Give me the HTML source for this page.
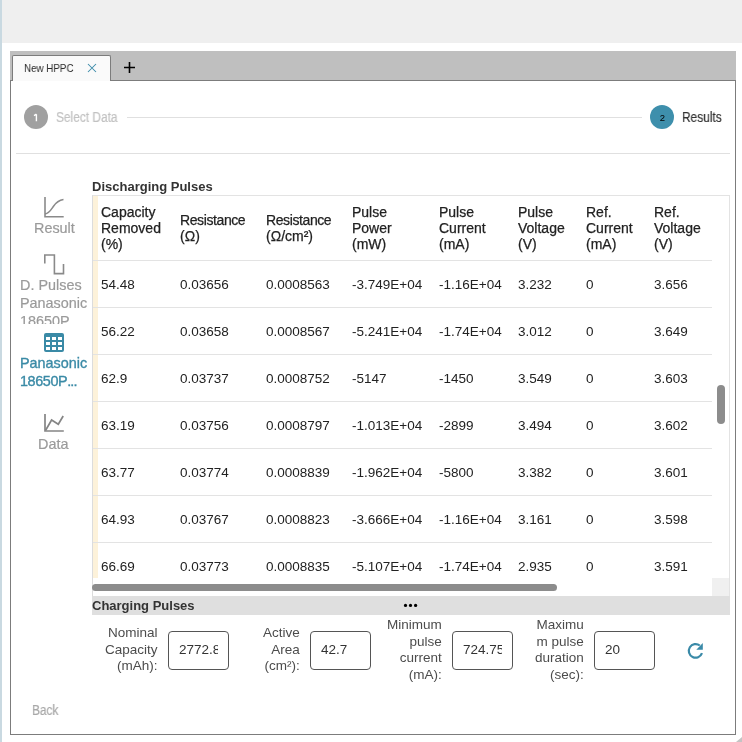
<!DOCTYPE html>
<html><head><meta charset="utf-8">
<style>
*{margin:0;padding:0;box-sizing:border-box;}
html,body{width:742px;height:742px;overflow:hidden;background:#fff;font-family:"Liberation Sans",sans-serif;position:relative;}
.a{will-change:transform;}
.a{position:absolute;white-space:nowrap;}
.topgray{left:0;top:0;width:742px;height:43px;background:#efefef;}
.bluestrip{left:0;top:0;width:2px;height:742px;background:#c9d9e1;}
.tabbar{left:10px;top:51px;width:726px;height:30px;background:#bfbfbf;}
.win{left:10px;top:80px;width:726px;height:655px;border:1px solid #7c7c7c;background:#fff;}
.tab{left:12px;top:55px;width:99px;height:26px;background:#fafafa;border:1px solid #7c7c7c;border-bottom:none;border-radius:2px 2px 0 0;}
.tabtxt{left:24.3px;top:62px;font-size:11px;color:#2a2a2a;transform:scaleX(0.89);transform-origin:0 0;}
.circ{width:24px;height:24px;border-radius:50%;text-align:center;font-size:10px;line-height:26px;}
.stepline{height:1px;background:#e0e0e0;}
.steplbl{font-size:14px;line-height:16px;transform:scaleX(0.85);transform-origin:0 0;-webkit-text-stroke:0.2px currentColor;}
.side{font-size:14.4px;line-height:18px;color:#9a9a9a;-webkit-text-stroke:0.2px #9a9a9a;}
.title{font-size:13px;font-weight:bold;color:#333;line-height:16px;}
.th{font-size:14px;line-height:16px;color:#222;-webkit-text-stroke:0.25px #222;}
.td{font-size:13.5px;line-height:16px;color:#222;}
.sep{left:93px;width:619px;height:1px;background:#e3e3e3;}
.lbl{font-size:13.5px;line-height:16.5px;color:#4c4c4c;text-align:right;}
.inp{width:61px;height:39px;border:1px solid #555;border-radius:4px;background:#fff;}
.it{position:absolute;left:10px;right:10px;top:0;overflow:hidden;font-size:13.5px;line-height:35px;color:#333;white-space:nowrap;}
</style></head><body>
<div class="a topgray"></div>
<div class="a bluestrip"></div>
<div class="a tabbar"></div>
<div class="a win"></div>
<div class="a tab"></div>
<div class="a tabtxt">New HPPC</div>
<svg class="a" style="left:87px;top:63px" width="10" height="10" viewBox="0 0 10 10"><path d="M1 1L9 9M9 1L1 9" stroke="#3a8aa8" stroke-width="1.05" fill="none"/></svg>
<svg class="a" style="left:123px;top:61px" width="13" height="13" viewBox="0 0 13 13"><path d="M6.5 1V12M1 6.5H12" stroke="#000" stroke-width="1.6" fill="none"/></svg>

<!-- stepper -->
<div class="a circ" style="left:24px;top:105px;background:#a0a0a0;"></div>
<svg class="a" style="left:24px;top:105px" width="24" height="24" viewBox="0 0 24 24"><path d="M12.4 9.2V16.2M10 10.7L12.4 9.2" stroke="#fff" stroke-width="1.4" fill="none"/></svg>
<div class="a steplbl" style="left:56px;top:109px;color:#c2c2c2;">Select Data</div>
<div class="a stepline" style="left:127px;top:117px;width:515px;"></div>
<div class="a circ" style="left:650px;top:105px;background:#3e8fac;color:#000;font-size:9.5px;line-height:25px;padding-left:1px;">2</div>
<div class="a steplbl" style="left:682px;top:109px;color:#333;">Results</div>
<div class="a stepline" style="left:16px;top:153px;width:714px;"></div>

<!-- sidebar -->
<svg class="a" style="left:42px;top:195px" width="24" height="24" viewBox="0 0 24 24"><path d="M3 2V21.7H21.7" stroke="#8a8a8a" stroke-width="1.6" fill="none"/><path d="M3 19C7 18.5 9 15 11 12S15 5.5 21.5 4.5" stroke="#8a8a8a" stroke-width="1.5" fill="none"/></svg>
<div class="a side" style="left:34px;top:219px;">Result</div>
<svg class="a" style="left:42px;top:252px" width="24" height="24" viewBox="0 0 24 24"><path d="M2.8 11.5V3H12.4V21.6H21.5V12" stroke="#8a8a8a" stroke-width="1.6" fill="none"/></svg>
<div class="a" style="left:0;top:270px;width:92px;height:54px;overflow:hidden;">
<div class="a side" style="left:20px;top:6px;">D. Pulses</div>
<div class="a side" style="left:20px;top:24px;">Panasonic</div>
<div class="a side" style="left:20px;top:42px;">18650P</div>
</div>
<svg class="a" style="left:44px;top:333px" width="20" height="19" viewBox="0 0 20 19"><path fill="#3a8aa6" fill-rule="evenodd" d="M2 0H18Q20 0 20 2V17Q20 19 18 19H2Q0 19 0 17V2Q0 0 2 0ZM2 4V7H6V4ZM8 4V7H12V4ZM14 4V7H18V4ZM2 9V12H6V9ZM8 9V12H12V9ZM14 9V12H18V9ZM2 14V17H6V14ZM8 14V17H12V14ZM14 14V17H18V14Z"/></svg>
<div class="a side" style="left:20px;top:354px;color:#3a8aa6;-webkit-text-stroke:0.35px #3a8aa6;">Panasonic</div>
<div class="a side" style="left:20px;top:372px;color:#3a8aa6;-webkit-text-stroke:0.35px #3a8aa6;letter-spacing:-0.4px;">18650P<span style="letter-spacing:-0.9px">...</span></div>
<svg class="a" style="left:42px;top:412px" width="24" height="24" viewBox="0 0 24 24"><path d="M3 2V19H21.8" stroke="#858585" stroke-width="1.7" fill="none"/><path d="M3.5 18.5L9.6 8L16.3 12.3L21.2 4" stroke="#858585" stroke-width="1.7" fill="none"/></svg>
<div class="a side" style="left:38px;top:435px;">Data</div>

<!-- discharging -->
<div class="a title" style="left:92px;top:179px;">Discharging Pulses</div>
<div class="a" style="left:92px;top:195px;width:638px;height:401px;border-top:1px solid #e3e3e3;border-left:1px solid #dcdcdc;border-right:1px solid #e3e3e3;"></div>
<div class="a" style="left:93px;top:196px;width:5px;height:382px;background:#fdf2da;"></div>
<div class="a th" style="left:101px;top:204px">Capacity<br>Removed<br>(%)</div>
<div class="a th" style="left:180px;top:212px"><span style="letter-spacing:-0.4px">Resistance</span><br>(&Omega;)</div>
<div class="a th" style="left:266px;top:212px"><span style="letter-spacing:-0.4px">Resistance</span><br>(&Omega;/cm&sup2;)</div>
<div class="a th" style="left:352px;top:204px">Pulse<br>Power<br>(mW)</div>
<div class="a th" style="left:439px;top:204px">Pulse<br>Current<br>(mA)</div>
<div class="a th" style="left:518px;top:204px">Pulse<br>Voltage<br>(V)</div>
<div class="a th" style="left:586px;top:204px">Ref.<br>Current<br>(mA)</div>
<div class="a th" style="left:654px;top:204px">Ref.<br>Voltage<br>(V)</div>
<div class="a sep" style="top:260px"></div>
<div class="a sep" style="top:307px"></div>
<div class="a sep" style="top:354px"></div>
<div class="a sep" style="top:401px"></div>
<div class="a sep" style="top:448px"></div>
<div class="a sep" style="top:495px"></div>
<div class="a sep" style="top:542px"></div>
<div class="a td" style="left:101px;top:276.5px">54.48</div>
<div class="a td" style="left:180px;top:276.5px">0.03656</div>
<div class="a td" style="left:266px;top:276.5px">0.0008563</div>
<div class="a td" style="left:352px;top:276.5px">-3.749E+04</div>
<div class="a td" style="left:439px;top:276.5px">-1.16E+04</div>
<div class="a td" style="left:518px;top:276.5px">3.232</div>
<div class="a td" style="left:586px;top:276.5px">0</div>
<div class="a td" style="left:654px;top:276.5px">3.656</div>
<div class="a td" style="left:101px;top:323.5px">56.22</div>
<div class="a td" style="left:180px;top:323.5px">0.03658</div>
<div class="a td" style="left:266px;top:323.5px">0.0008567</div>
<div class="a td" style="left:352px;top:323.5px">-5.241E+04</div>
<div class="a td" style="left:439px;top:323.5px">-1.74E+04</div>
<div class="a td" style="left:518px;top:323.5px">3.012</div>
<div class="a td" style="left:586px;top:323.5px">0</div>
<div class="a td" style="left:654px;top:323.5px">3.649</div>
<div class="a td" style="left:101px;top:370.5px">62.9</div>
<div class="a td" style="left:180px;top:370.5px">0.03737</div>
<div class="a td" style="left:266px;top:370.5px">0.0008752</div>
<div class="a td" style="left:352px;top:370.5px">-5147</div>
<div class="a td" style="left:439px;top:370.5px">-1450</div>
<div class="a td" style="left:518px;top:370.5px">3.549</div>
<div class="a td" style="left:586px;top:370.5px">0</div>
<div class="a td" style="left:654px;top:370.5px">3.603</div>
<div class="a td" style="left:101px;top:417.5px">63.19</div>
<div class="a td" style="left:180px;top:417.5px">0.03756</div>
<div class="a td" style="left:266px;top:417.5px">0.0008797</div>
<div class="a td" style="left:352px;top:417.5px">-1.013E+04</div>
<div class="a td" style="left:439px;top:417.5px">-2899</div>
<div class="a td" style="left:518px;top:417.5px">3.494</div>
<div class="a td" style="left:586px;top:417.5px">0</div>
<div class="a td" style="left:654px;top:417.5px">3.602</div>
<div class="a td" style="left:101px;top:464.5px">63.77</div>
<div class="a td" style="left:180px;top:464.5px">0.03774</div>
<div class="a td" style="left:266px;top:464.5px">0.0008839</div>
<div class="a td" style="left:352px;top:464.5px">-1.962E+04</div>
<div class="a td" style="left:439px;top:464.5px">-5800</div>
<div class="a td" style="left:518px;top:464.5px">3.382</div>
<div class="a td" style="left:586px;top:464.5px">0</div>
<div class="a td" style="left:654px;top:464.5px">3.601</div>
<div class="a td" style="left:101px;top:511.5px">64.93</div>
<div class="a td" style="left:180px;top:511.5px">0.03767</div>
<div class="a td" style="left:266px;top:511.5px">0.0008823</div>
<div class="a td" style="left:352px;top:511.5px">-3.666E+04</div>
<div class="a td" style="left:439px;top:511.5px">-1.16E+04</div>
<div class="a td" style="left:518px;top:511.5px">3.161</div>
<div class="a td" style="left:586px;top:511.5px">0</div>
<div class="a td" style="left:654px;top:511.5px">3.598</div>
<div class="a td" style="left:101px;top:558.5px">66.69</div>
<div class="a td" style="left:180px;top:558.5px">0.03773</div>
<div class="a td" style="left:266px;top:558.5px">0.0008835</div>
<div class="a td" style="left:352px;top:558.5px">-5.107E+04</div>
<div class="a td" style="left:439px;top:558.5px">-1.74E+04</div>
<div class="a td" style="left:518px;top:558.5px">2.935</div>
<div class="a td" style="left:586px;top:558.5px">0</div>
<div class="a td" style="left:654px;top:558.5px">3.591</div>
<div class="a" style="left:717px;top:385px;width:8px;height:39px;border-radius:4px;background:#8c8c8c;"></div>
<div class="a" style="left:92px;top:584px;width:465px;height:7px;border-radius:3.5px;background:#8c8c8c;"></div>
<div class="a" style="left:712px;top:578px;width:17px;height:18px;background:#f0f0f0;"></div>

<!-- charging -->
<div class="a" style="left:92px;top:596px;width:638px;height:19px;background:#dfdfdf;"></div>
<div class="a title" style="left:92px;top:598px;">Charging Pulses</div>
<svg class="a" style="left:402px;top:602px" width="17" height="7" viewBox="0 0 17 7"><circle cx="3.5" cy="3.4" r="1.6" fill="#000"/><circle cx="8.5" cy="3.4" r="1.6" fill="#000"/><circle cx="13.6" cy="3.4" r="1.6" fill="#000"/></svg>

<div class="a lbl" style="right:584px;top:624.5px;">Nominal<br>Capacity<br>(mAh):</div>
<div class="a inp" style="left:168px;top:631px;"><div class="it">2772.8</div></div>
<div class="a lbl" style="right:442px;top:624.5px;">Active<br>Area<br>(cm&sup2;):</div>
<div class="a inp" style="left:310px;top:631px;"><div class="it">42.7</div></div>
<div class="a lbl" style="right:300px;top:617px;">Minimum<br>pulse<br>current<br>(mA):</div>
<div class="a inp" style="left:452px;top:631px;"><div class="it">724.75</div></div>
<div class="a lbl" style="right:158px;top:617px;">Maximu<br>m pulse<br>duration<br>(sec):</div>
<div class="a inp" style="left:594px;top:631px;"><div class="it">20</div></div>
<svg class="a" style="left:685px;top:641px" width="20" height="20" viewBox="0 0 20 20"><path d="M17 12.2A6.8 6.8 0 1 1 14.8 4.5" stroke="#3a8aa8" stroke-width="2.2" fill="none"/><path d="M17.8 2V8.7H11.3Z" fill="#3a8aa8"/></svg>

<div class="a steplbl" style="left:32px;top:702px;color:#a8a8a8;">Back</div>
<svg class="a" style="left:736px;top:737px" width="6" height="5" viewBox="0 0 6 5"><path d="M6 0L0 5H6Z" fill="#c4c4c4"/></svg>
</body></html>
